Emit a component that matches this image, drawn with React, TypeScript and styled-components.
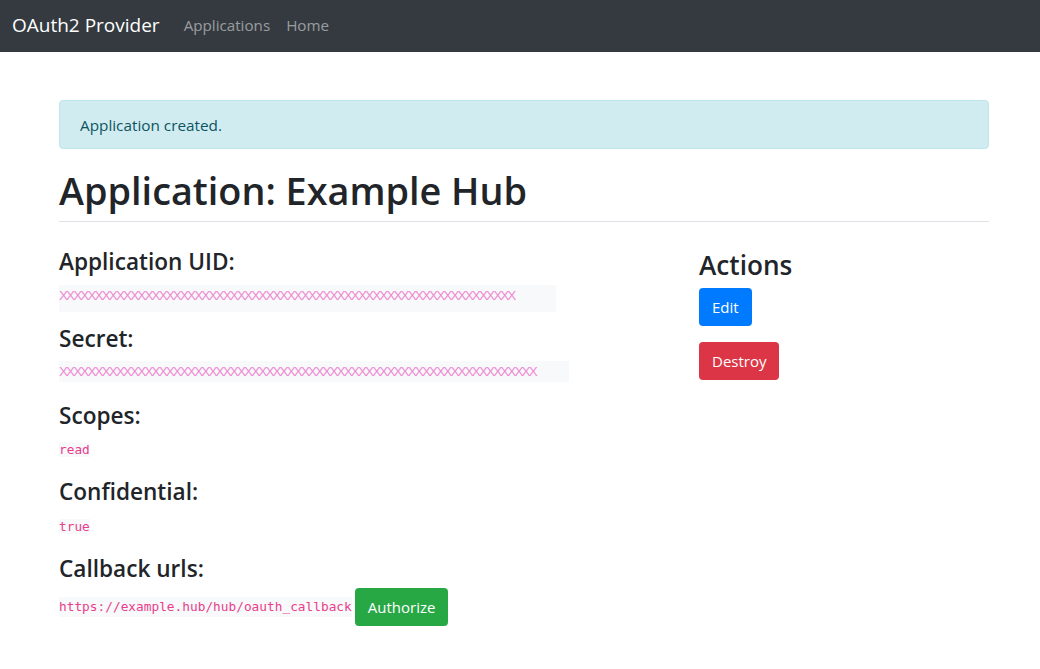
import React from "react";
import styled, { createGlobalStyle } from "styled-components";

const GlobalStyle = createGlobalStyle`
    * { box-sizing: border-box; }
    body {
        margin: 0;
        font-family: "Open Sans", "Noto Sans", sans-serif;
        font-size: 16px;
        line-height: 1.5;
        color: #212529;
        background: #fff;
    }
`;

const Navbar = styled.nav`
    height: 52px;
    display: flex;
    align-items: center;
    padding: 0 12px 2px;
    background: #343a40;
`;

const Brand = styled.a`
    font-size: 19px;
    color: #fff;
    margin-right: 16px;
    text-decoration: none;
`;

const NavLink = styled.a`
    font-size: 15.2px;
    color: rgba(255, 255, 255, 0.5);
    padding: 0 8px;
    text-decoration: none;
`;

const Container = styled.main`
    width: 930px;
    margin: 48px 0 0 59px;
`;

const Alert = styled.div`
    padding: 13px 20px 11px;
    margin-bottom: 16px;
    border: 1px solid #bee5eb;
    border-radius: 4px;
    background: #d1ecf1;
    color: #0c5460;
    font-size: 15.3px;
`;

const Header = styled.div`
    border-bottom: 1px solid #dee2e6;
    margin-bottom: 24px;
    h1 {
        margin: 0 0 6px;
        padding-top: 2px;
        font-size: 37.8px;
        font-weight: 600;
        line-height: 48px;
    }
`;

const Row = styled.div`
    display: grid;
    grid-template-columns: 640px 1fr;
`;

const Col = styled.div``;

const Label = styled.h4`
    margin: 0 0 6px;
    padding-top: 2px;
    font-size: 22.6px;
    font-weight: 600;
    line-height: 28.8px;
`;

const ActionsTitle = styled.h3`
    margin: 0 0 5px;
    padding-top: 3px;
    font-size: 26.2px;
    font-weight: 600;
    line-height: 33.6px;
`;

const Para = styled.p`
    margin: 0 0 16px;
    height: 24px;
`;

const Code = styled.code`
    font-family: "DejaVu Sans Mono", "Liberation Mono", monospace;
    font-size: 12.8px;
    color: #e83e8c;
    background: #f8f9fa;
`;

const Redacted = styled.code<{ $width: number; $height: number; $offset: number }>`
    display: inline-block;
    vertical-align: top;
    width: ${(p) => p.$width}px;
    height: ${(p) => p.$height}px;
    margin-top: ${(p) => p.$offset}px;
    background: #f8f9fa;
    color: #ef8ad4;
    font-family: "Liberation Sans", Arial, sans-serif;
    font-size: 13.6px;
    line-height: 21px;
    letter-spacing: -1.95px;
    white-space: nowrap;
    overflow: hidden;
`;

const UrlRow = styled.div`
    display: flex;
    align-items: center;
    gap: 3px;
    margin-top: -2px;
`;

const ActionItem = styled.div`
    display: flex;
    margin-bottom: 16px;
`;

const Button = styled.a<{ $variant: "primary" | "danger" | "success" }>`
    display: inline-block;
    padding: 6px 12px;
    border: 1px solid transparent;
    font-size: 15px;
    line-height: 24px;
    color: #fff;
    border-radius: 4px;
    text-decoration: none;
    background: ${(p) =>
        p.$variant === "primary" ? "#007bff" : p.$variant === "danger" ? "#dc3545" : "#28a745"};
`;

const App = () => {
    return (
        <>
            <GlobalStyle />
            <Navbar>
                <Brand href="#">OAuth2 Provider</Brand>
                <NavLink href="#">Applications</NavLink>
                <NavLink href="#">Home</NavLink>
            </Navbar>
            <Container>
                <Alert>Application created.</Alert>
                <Header>
                    <h1>Application: Example Hub</h1>
                </Header>
                <Row>
                    <Col>
                        <Label>Application UID:</Label>
                        <Para>
                            <Redacted $width={497} $height={27} $offset={2}>{"X".repeat(64)}</Redacted>
                        </Para>
                        <Label>Secret:</Label>
                        <Para>
                            <Redacted $width={510} $height={21} $offset={1}>{"X".repeat(67)}</Redacted>
                        </Para>
                        <Label>Scopes:</Label>
                        <Para>
                            <Code>read</Code>
                        </Para>
                        <Label>Confidential:</Label>
                        <Para>
                            <Code>true</Code>
                        </Para>
                        <Label>Callback urls:</Label>
                        <UrlRow>
                            <Code>https://example.hub/hub/oauth_callback</Code>
                            <Button $variant="success" href="#">Authorize</Button>
                        </UrlRow>
                    </Col>
                    <Col>
                        <ActionsTitle>Actions</ActionsTitle>
                        <ActionItem>
                            <Button $variant="primary" href="#">Edit</Button>
                        </ActionItem>
                        <ActionItem>
                            <Button $variant="danger" href="#">Destroy</Button>
                        </ActionItem>
                    </Col>
                </Row>
            </Container>
        </>
    );
};

export default App;
